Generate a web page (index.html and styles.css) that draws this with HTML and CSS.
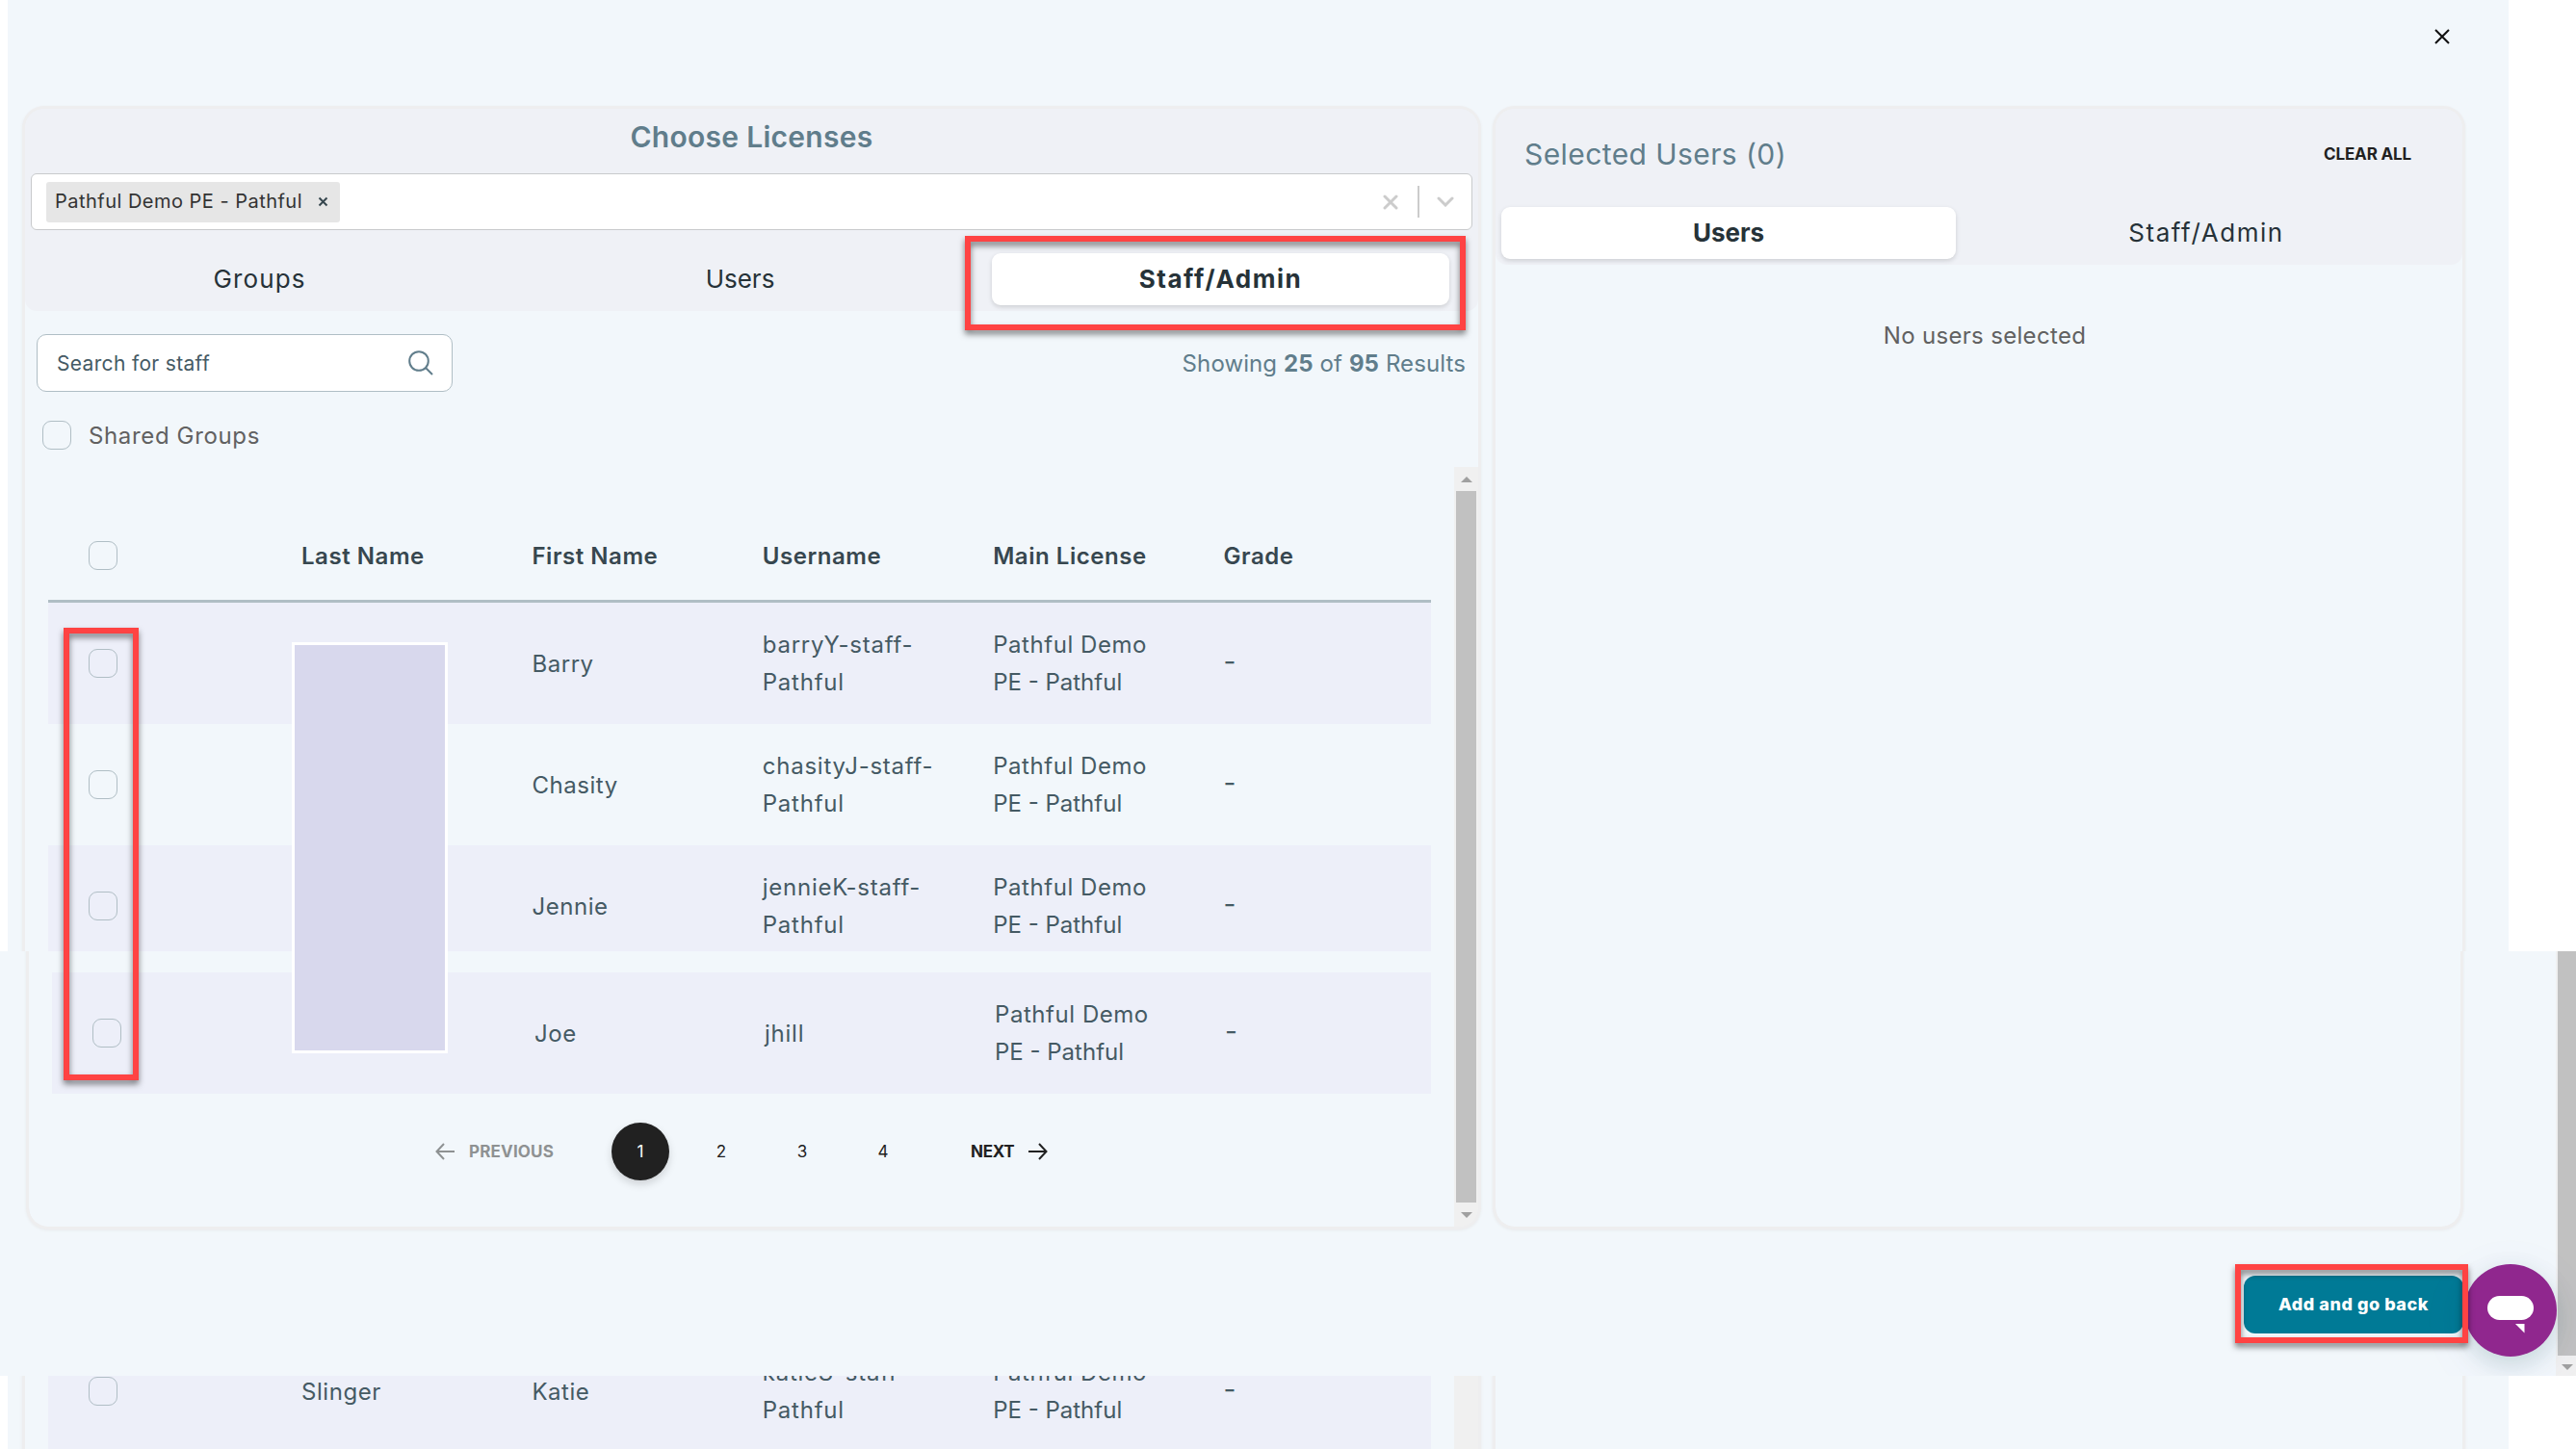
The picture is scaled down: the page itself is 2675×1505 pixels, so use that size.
FILE: index.html
```html
<!DOCTYPE html>
<html lang="en">

<head>
    <title>Choose Licenses</title>
    <meta charset="utf-8">
    <meta name="viewport" content="width=device-width, initial-scale=1.0">

    <link rel="stylesheet" href="styles.css">
</head>

<body>

    <section class="band top">
        <svg class="close" viewBox="0 0 16 16"><path d="M1 1 15 15M15 1 1 15" /></svg>

        <div class="panels">
            <article class="panel licenses">
                <header>
                    <h1>Choose Licenses</h1>
                    <div class="select">
                        <div class="chip">
                            <span>Pathful Demo PE - Pathful</span>
                            <svg viewBox="0 0 11 11"><path d="M1.5 1.5 9.5 9.5M9.5 1.5 1.5 9.5" /></svg>
                        </div>
                        <div class="indicators">
                            <svg class="clear" viewBox="0 0 16 16"><path d="M2 2 14 14M14 2 2 14" /></svg>
                            <i></i>
                            <svg class="chevron" viewBox="0 0 18 11"><path d="M2 2 9 9 16 2" /></svg>
                        </div>
                    </div>
                    <nav class="tabs">
                        <button class="groups">Groups</button>
                        <button>Users</button>
                        <button class="active staff">Staff/Admin</button>
                    </nav>
                </header>

                <div class="tools">
                    <div class="search">
                        <span>Search for staff</span>
                        <svg viewBox="0 0 26 26"><circle cx="11" cy="11" r="9.8" /><path d="M18 18 25 25" /></svg>
                    </div>
                    <p class="results">Showing <b>25</b> of <b>95</b> Results</p>
                </div>
                <label class="shared"><i class="check"></i><span>Shared Groups</span></label>

                <div class="listing">
                    <div class="table">
                        <div class="row head">
                            <i class="check"></i>
                            <span>Last Name</span>
                            <span>First Name</span>
                            <span>Username</span>
                            <span>Main License</span>
                            <span>Grade</span>
                        </div>
                        <div class="row odd">
                            <i class="check"></i>
                            <span></span>
                            <span>Barry</span>
                            <span class="user">barryY-staff-<br>Pathful</span>
                            <span>Pathful Demo<br><em>PE - Pathful</em></span>
                            <span class="grade">-</span>
                        </div>
                        <div class="row">
                            <i class="check"></i>
                            <span></span>
                            <span>Chasity</span>
                            <span class="user">chasityJ-staff-<br>Pathful</span>
                            <span>Pathful Demo<br><em>PE - Pathful</em></span>
                            <span class="grade">-</span>
                        </div>
                        <div class="row odd">
                            <i class="check"></i>
                            <span></span>
                            <span>Jennie</span>
                            <span class="user">jennieK-staff-<br>Pathful</span>
                            <span>Pathful Demo<br><em>PE - Pathful</em></span>
                            <span class="grade">-</span>
                        </div>
                    </div>
                    <div class="scrollbar">
                        <svg viewBox="0 0 12 6"><path d="M0 6 6 0 12 6Z" /></svg>
                        <i class="thumb"></i>
                    </div>
                </div>
            </article>

            <article class="panel selected">
                <header>
                    <div class="title">
                        <h2>Selected Users (0)</h2>
                        <button class="clearall">CLEAR ALL</button>
                    </div>
                    <nav class="tabs">
                        <button class="active">Users</button>
                        <button class="staff">Staff/Admin</button>
                    </nav>
                </header>
                <p class="empty">No users selected</p>
            </article>
        </div>
    </section>

    <section class="band middle">
        <div class="page">
            <div class="panels">
                <article class="panel licenses">
                    <div class="listing">
                        <div class="table">
                            <div class="row odd">
                                <i class="check"></i>
                                <span></span>
                                <span>Joe</span>
                                <span class="user">jhill</span>
                                <span>Pathful Demo<br><em>PE - Pathful</em></span>
                                <span class="grade">-</span>
                            </div>
                            <nav class="pager">
                                <svg class="prev" viewBox="0 0 20 18"><path d="M20 9H1.5M9 1 1.5 9 9 17" /></svg>
                                <span class="prev">PREVIOUS</span>
                                <button class="current">1</button>
                                <button>2</button>
                                <button>3</button>
                                <button>4</button>
                                <span class="next">NEXT</span>
                                <svg viewBox="0 0 20 18"><path d="M0 9H18.5M11 1 18.5 9 11 17" /></svg>
                            </nav>
                        </div>
                        <div class="scrollbar">
                            <i class="thumb"></i>
                            <svg viewBox="0 0 12 6"><path d="M0 0H12L6 6Z" /></svg>
                        </div>
                    </div>
                </article>
                <article class="panel selected"></article>
            </div>
            <footer>
                <button class="add">Add and go back</button>
            </footer>
        </div>
        <div class="scrollbar outer">
            <i class="thumb"></i>
            <svg viewBox="0 0 12 6"><path d="M0 0H12L6 6Z" /></svg>
        </div>
        <div class="chat">
            <svg viewBox="0 0 96 96"><rect x="24" y="33" width="48" height="25" rx="12.5" /><path d="M53 62H62.5V71.5Z" /></svg>
        </div>
    </section>

    <section class="band bottom">
        <div class="panels">
            <article class="panel licenses">
                <div class="listing">
                    <div class="table">
                        <div class="row odd">
                            <i class="check"></i>
                            <span>Slinger</span>
                            <span>Katie</span>
                            <span class="user">katieS-staff-<br>Pathful</span>
                            <span>Pathful Demo<br><em>PE - Pathful</em></span>
                            <span class="grade">-</span>
                        </div>
                    </div>
                    <div class="scrollbar"></div>
                </div>
            </article>
            <article class="panel selected"></article>
        </div>
    </section>

    <!-- cover for the last names and the highlight frames -->
    <div class="cover"></div>
    <div class="mark mark-checks"></div>
    <div class="mark mark-tab"></div>
    <div class="mark mark-add"></div>
</body>

</html>
```
FILE: styles.css
```css
* {
    box-sizing: border-box;
}

body {
    margin: 0;
    position: relative;
    width: 2675px;
    height: 1505px;
    overflow: hidden;
    background-color: white;
    font-family: Inter, "Open Sans", sans-serif;
    color: #455a64;
}

h1,
h2,
p {
    margin: 0;
    font-weight: 400;
}

button {
    border: none;
    padding: 0;
    background: none;
    font-family: inherit;
    color: inherit;
}

svg {
    display: block;
    fill: none;
    stroke: currentColor;
    stroke-width: 2;
    flex: none;
}

.band {
    overflow: hidden;
    background-color: #f2f7fb;
}

.top {
    height: 988px;
    margin: 0 70px 0 8px;
    padding: 30px 0 0 18px;
}

.close {
    width: 16px;
    height: 16px;
    margin-left: 2502px;
    color: #111;
}

.panels {
    display: flex;
    gap: 18px;
}

.panel {
    box-shadow: 0 0 0 3px #eeeeef, 0 1px 3px 3px #e9ebed;
}

.licenses {
    width: 1509px;
}

.selected {
    width: 1004px;
}

.top .panels {
    margin-top: 67px;
}

.top .panel {
    height: 900px;
    border-radius: 20px 20px 0 0;
}

.panel header {
    background-color: #eff1f6;
    border-radius: 20px 20px 12px 12px;
}

.licenses header {
    height: 210px;
}

.selected header {
    height: 162px;
}

h1 {
    height: 67px;
    line-height: 59px;
    text-align: center;
    font-size: 30px;
    font-weight: 600;
    letter-spacing: .28px;
    color: #607d8b;
}

.select {
    display: flex;
    justify-content: space-between;
    align-items: center;
    height: 59px;
    margin: 0 6px;
    padding: 0 18px 0 15px;
    background-color: white;
    border: 1px solid #c8cacc;
    border-radius: 6px;
}

.chip {
    display: flex;
    align-items: center;
    gap: 16px;
    width: 305px;
    height: 42px;
    padding: 0 0 2px 9px;
    background-color: #e6e6e6;
    border-radius: 3px;
    font-size: 20px;
    letter-spacing: .48px;
    color: #333;
    white-space: nowrap;
}

.chip svg {
    width: 11px;
    height: 11px;
    margin-top: 2px;
    color: #37474f;
}

.indicators {
    display: flex;
    align-items: center;
    color: #ccc;
}

.indicators svg {
    stroke-width: 3;
    stroke-linecap: round;
}

.indicators i {
    width: 2px;
    height: 33px;
    margin: 0 18px 0 20px;
    background-color: #ccc;
}

.clear {
    width: 16px;
    height: 16px;
}

.chevron {
    width: 18px;
    height: 11px;
}

.tabs {
    display: grid;
    grid-template-columns: repeat(3, 475px);
    gap: 24px;
    padding: 24px 6px 0;
}

.selected .tabs {
    grid-template-columns: repeat(2, 472px);
    padding-top: 8px;
}

.tabs button {
    height: 54px;
    padding-bottom: 2px;
    border-radius: 9px;
    font-size: 26px;
    color: #263238;
}

.tabs .groups {
    letter-spacing: 1.1px;
}

.tabs .staff {
    letter-spacing: 1.55px;
}

.tabs .active {
    background-color: white;
    font-weight: 700;
    box-shadow: 0 2px 5px rgba(0, 0, 0, .14);
}

.tools {
    display: flex;
    justify-content: space-between;
    align-items: center;
    margin: 24px 13px 0 12px;
}

.search {
    display: flex;
    justify-content: space-between;
    align-items: center;
    width: 432px;
    height: 60px;
    padding: 0 19px 0 20px;
    background-color: white;
    border: 1px solid #b0bec5;
    border-radius: 10px;
    font-size: 21px;
    letter-spacing: .33px;
}

.search svg {
    width: 26px;
    height: 26px;
    color: #607d8b;
}

.results {
    font-size: 24px;
    letter-spacing: .1px;
    color: #607d8b;
}

.shared {
    display: flex;
    align-items: center;
    gap: 18px;
    margin: 30px 0 0 18px;
    font-size: 24px;
    letter-spacing: .64px;
    color: #616161;
}

.check {
    flex: none;
    width: 30px;
    height: 30px;
    border: 1px solid #b0bec5;
    border-radius: 9px;
}

.listing {
    display: flex;
    justify-content: space-between;
}

.top .listing {
    margin-top: 18px;
}

.table {
    width: 1436px;
    margin-left: 24px;
}

.top .table {
    padding-top: 48px;
}

.row {
    display: grid;
    grid-template-columns: 221px repeat(4, 239.4px) 1fr;
    align-items: center;
    height: 126px;
    padding-left: 42px;
    font-size: 24px;
    line-height: 39px;
    letter-spacing: .55px;
}

.row .user {
    letter-spacing: .75px;
}

.row em {
    font-style: normal;
    letter-spacing: 0;
}

.row .grade {
    margin-top: -3px;
    font-size: 28px;
}

.odd {
    background-color: #edeff9;
}

.head {
    height: 93px;
    padding-bottom: 2px;
    border-bottom: 3px solid #b0bec5;
    font-weight: 600;
    color: #37474f;
}

.scrollbar {
    display: flex;
    flex-direction: column;
    align-items: center;
    width: 25px;
    background-color: #f0f0f0;
}

.scrollbar svg {
    width: 12px;
    height: 6px;
    margin: 10px 0 9px;
    fill: #a0a0a0;
    stroke: none;
}

.thumb {
    flex: 1;
    width: 21px;
    background-color: #c1c1c1;
}

.title {
    display: flex;
    justify-content: space-between;
    align-items: center;
    height: 94px;
    padding: 0 53px 0 30px;
}

h2 {
    font-size: 30px;
    letter-spacing: .42px;
    color: #607d8b;
}

.clearall {
    font-size: 17px;
    font-weight: 700;
    letter-spacing: -.15px;
    color: #212121;
}

.empty {
    padding: 58px 0 0 12px;
    text-align: center;
    font-size: 24px;
    line-height: 32px;
    letter-spacing: .32px;
    color: #616161;
}

/* lower part of the dialog with the pager and the button */
.middle {
    position: relative;
    display: flex;
    height: 441px;
}

.page {
    flex: 1;
    padding-left: 30px;
}

.middle .panel {
    height: 286px;
    border-radius: 0 0 20px 20px;
    overflow: hidden;
}

.middle .licenses {
    width: 1505px;
}

.middle .selected {
    width: 1002px;
}

.middle .table {
    width: 1432px;
    padding-top: 22px;
}

.middle .listing {
    height: 100%;
}

.middle .row {
    grid-template-columns: 220px repeat(4, 239px) 1fr;
}

.pager {
    display: flex;
    align-items: center;
    margin: 30px 0 0 398px;
    font-size: 17px;
    font-weight: 700;
    color: #212121;
}

.pager svg {
    width: 20px;
    height: 18px;
}

.pager .prev {
    color: #8e9192;
}

.pager span.prev {
    width: 148px;
    margin: 0 0 0 15px;
    letter-spacing: .17px;
}

.pager button {
    width: 60px;
    height: 60px;
    margin-right: 24px;
    border-radius: 50%;
    font-size: 17px;
}

.pager .current {
    background-color: #212121;
    color: white;
    box-shadow: 0 4px 8px rgba(0, 0, 0, .15);
}

.pager .next {
    width: 60px;
    margin-left: 37px;
    letter-spacing: -.3px;
}

footer {
    display: flex;
    justify-content: flex-end;
    padding: 51px 96px 0 0;
}

.add {
    width: 228px;
    height: 60px;
    padding-bottom: 1px;
    background-color: #007a96;
    border-radius: 12px;
    font-size: 18px;
    font-weight: 800;
    letter-spacing: .54px;
    color: white;
}

.outer {
    width: 21px;
    padding-left: 2px;
}

.outer .thumb {
    width: 19px;
}

.outer svg {
    margin: 9px 0 6px;
}

.chat {
    position: absolute;
    left: 2559px;
    top: 325px;
    width: 96px;
    height: 96px;
    border-radius: 50%;
    background-color: #90278e;
    box-shadow: 0 8px 24px rgba(0, 77, 64, .16), 0 12px 60px rgba(80, 80, 220, .06);
}

.chat svg {
    fill: white;
    stroke: none;
}

.bottom {
    height: 76px;
    margin: 0 70px 0 8px;
    padding-left: 18px;
}

.bottom .panel {
    height: 90px;
}

.bottom .row {
    margin-top: -47px;
}

.bottom .listing {
    height: 76px;
    overflow: hidden;
}

.cover {
    position: absolute;
    left: 303px;
    top: 667px;
    width: 162px;
    height: 427px;
    background-color: #d8d8ed;
    border: 3px solid white;
}

.mark {
    position: absolute;
    border: 6px solid #ff4343;
    filter: drop-shadow(0 4px 3px rgba(0, 0, 0, .5));
}

.mark-checks {
    left: 66px;
    top: 652px;
    width: 78px;
    height: 470px;
}

.mark-tab {
    left: 1002px;
    top: 245px;
    width: 520px;
    height: 98px;
}

.mark-add {
    left: 2321px;
    top: 1313px;
    width: 242px;
    height: 82px;
}
```
